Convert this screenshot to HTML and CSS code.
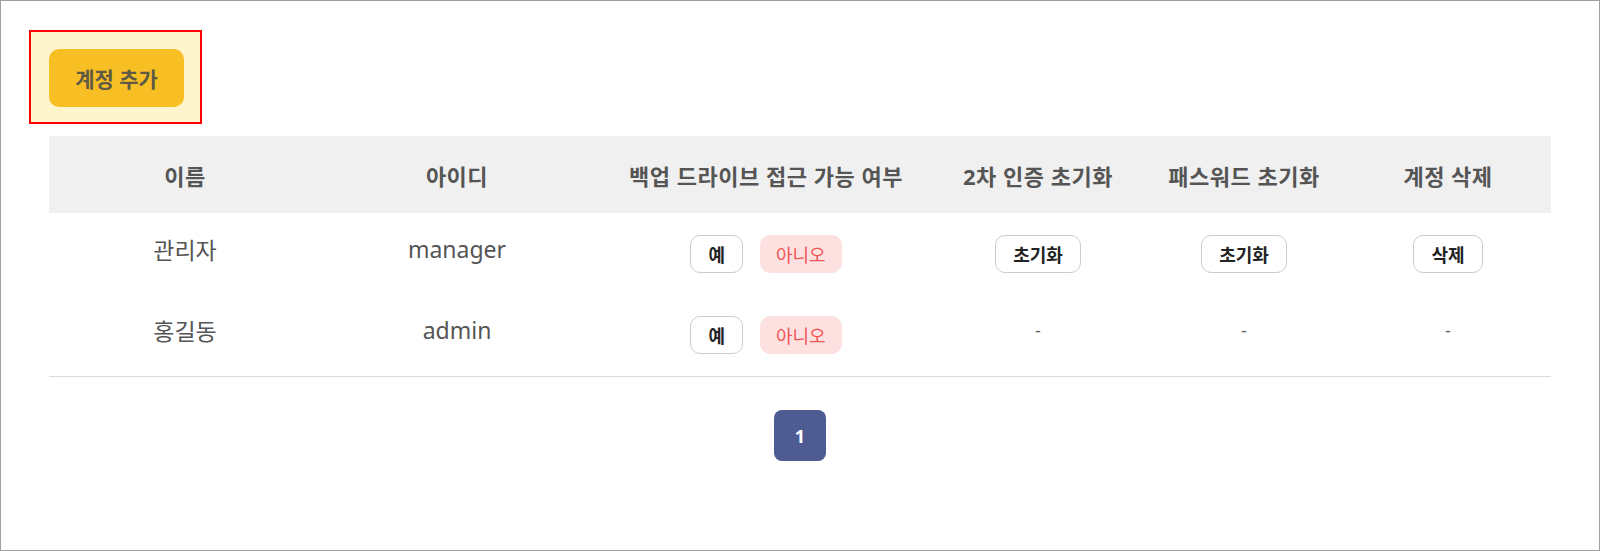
FILE: index.html
```html
<!DOCTYPE html>
<html lang="ko">
<head>
<meta charset="utf-8">
<title>계정 관리</title>
<link rel="stylesheet" href="styles.css">
</head>
<body>
<div class="frame">
  <div class="toolbar">
    <div class="highlight"><button class="btn-add">계정 추가</button></div>
  </div>
  <div class="table">
    <div class="row head">
      <div class="cell">이름</div>
      <div class="cell">아이디</div>
      <div class="cell">백업 드라이브 접근 가능 여부</div>
      <div class="cell">2차 인증 초기화</div>
      <div class="cell">패스워드 초기화</div>
      <div class="cell">계정 삭제</div>
    </div>
    <div class="row">
      <div class="cell text">관리자</div>
      <div class="cell text">manager</div>
      <div class="cell"><button class="chip">예</button><button class="chip no">아니오</button></div>
      <div class="cell"><button class="chip">초기화</button></div>
      <div class="cell"><button class="chip">초기화</button></div>
      <div class="cell"><button class="chip">삭제</button></div>
    </div>
    <div class="row">
      <div class="cell text">홍길동</div>
      <div class="cell text">admin</div>
      <div class="cell"><button class="chip">예</button><button class="chip no">아니오</button></div>
      <div class="cell text dash">-</div>
      <div class="cell text dash">-</div>
      <div class="cell text dash">-</div>
    </div>
  </div>
  <div class="pager"><button class="page active">1</button></div>
</div>
</body>
</html>
```

FILE: styles.css
```css
html, body {
  margin: 0;
  padding: 0;
  background: #ffffff;
}

.frame {
  width: 1600px;
  height: 551px;
  box-sizing: border-box;
  border: 1px solid #a0a0a0;
  padding: 29px 48px 0 48px;
  font-family: "Noto Sans", "Noto Sans CJK KR", sans-serif;
  color: #555555;
}

.toolbar {
  display: flex;
}

.highlight {
  display: flex;
  margin-left: -20px;
  border: 2px solid #ff0000;
  background: #fff5cc;
  padding: 17px 16px 15px 18px;
}

.btn-add {
  width: 135px;
  height: 58px;
  border: none;
  border-radius: 10px;
  background: #f8bf24;
  color: #5e5a45;
  font-family: "Noto Sans", "Noto Sans CJK KR", sans-serif;
  font-size: 21px;
  font-weight: 700;
  padding: 0;
}

.table {
  margin-top: 12px;
  width: 1502px;
  border-bottom: 1px solid #dcdcdc;
}

.row {
  display: grid;
  grid-template-columns: 272px 272px 346px 198px 214px 194px;
  padding-right: 6px;
  height: 81.5px;
  align-items: center;
  font-size: 23px;
}

.row.head {
  height: 77px;
  background: #f0f0f0;
  font-weight: 700;
  font-size: 22px;
  letter-spacing: 0.5px;
}

.cell {
  display: flex;
  justify-content: center;
  align-items: center;
  gap: 17px;
  white-space: nowrap;
}

.cell.text {
  padding-bottom: 10px;
}

.chip {
  height: 38px;
  padding: 0 17px;
  border: 1px solid #c9cdd8;
  border-radius: 10px;
  background: #ffffff;
  color: #222222;
  font-family: "Noto Sans", "Noto Sans CJK KR", sans-serif;
  font-size: 18px;
  font-weight: 700;
}

.chip.no {
  padding: 0 15px;
  background: #fde1e1;
  border-color: #fde1e1;
  color: #f05353;
  font-weight: 400;
}

.dash {
  font-size: 18px;
  color: #666666;
}

.pager {
  display: flex;
  justify-content: center;
  margin-top: 33px;
}

.page {
  width: 52px;
  height: 51px;
  border: none;
  border-radius: 8px;
  background: #4f5c94;
  color: #ffffff;
  font-family: "Noto Sans", "Noto Sans CJK KR", sans-serif;
  font-size: 18px;
  font-weight: 700;
}
```
